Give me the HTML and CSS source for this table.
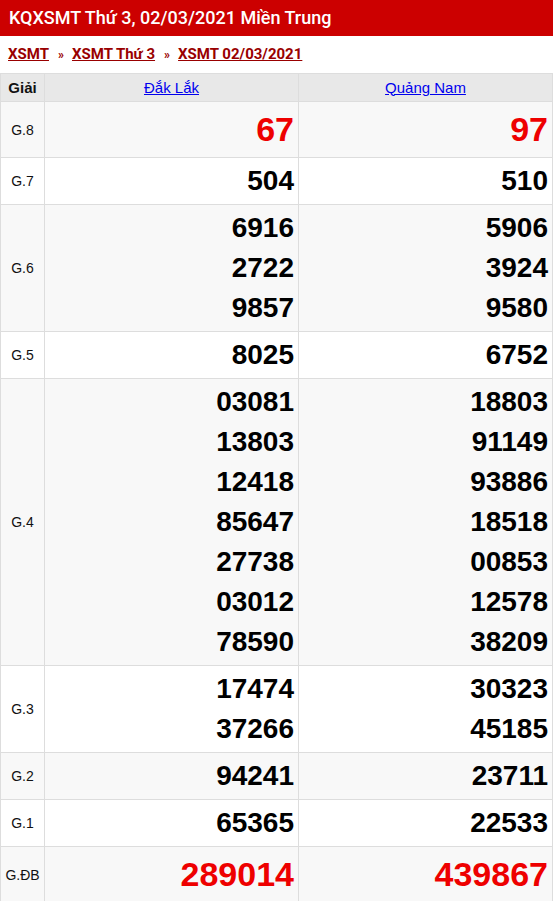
FILE: index.html
```html
<!DOCTYPE html>
<html>
<head>
<meta charset="utf-8">
<title>KQXSMT Thứ 3, 02/03/2021</title>
<link rel="stylesheet" href="styles.css">
</head>
<body>
<h1 class="title">KQXSMT Thứ 3, 02/03/2021 Miền Trung</h1>
<div class="crumbs">
  <a href="#">XSMT</a><span class="sep">»</span><a href="#">XSMT Thứ 3</a><span class="sep">»</span><a href="#">XSMT 02/03/2021</a>
</div>
<table class="results">
  <colgroup>
    <col class="prize">
    <col class="prov">
    <col class="prov">
  </colgroup>
  <thead>
    <tr>
      <th>Giải</th>
      <th><a href="#">Đắk Lắk</a></th>
      <th><a href="#">Quảng Nam</a></th>
    </tr>
  </thead>
  <tbody>
    <tr class="big">
      <td class="name">G.8</td>
      <td><div>67</div></td>
      <td><div>97</div></td>
    </tr>
    <tr>
      <td class="name">G.7</td>
      <td><div>504</div></td>
      <td><div>510</div></td>
    </tr>
    <tr>
      <td class="name">G.6</td>
      <td><div>6916</div><div>2722</div><div>9857</div></td>
      <td><div>5906</div><div>3924</div><div>9580</div></td>
    </tr>
    <tr>
      <td class="name">G.5</td>
      <td><div>8025</div></td>
      <td><div>6752</div></td>
    </tr>
    <tr>
      <td class="name">G.4</td>
      <td><div>03081</div><div>13803</div><div>12418</div><div>85647</div><div>27738</div><div>03012</div><div>78590</div></td>
      <td><div>18803</div><div>91149</div><div>93886</div><div>18518</div><div>00853</div><div>12578</div><div>38209</div></td>
    </tr>
    <tr>
      <td class="name">G.3</td>
      <td><div>17474</div><div>37266</div></td>
      <td><div>30323</div><div>45185</div></td>
    </tr>
    <tr>
      <td class="name">G.2</td>
      <td><div>94241</div></td>
      <td><div>23711</div></td>
    </tr>
    <tr>
      <td class="name">G.1</td>
      <td><div>65365</div></td>
      <td><div>22533</div></td>
    </tr>
    <tr class="big db">
      <td class="name">G.ĐB</td>
      <td><div>289014</div></td>
      <td><div>439867</div></td>
    </tr>
  </tbody>
</table>
</body>
</html>
```
FILE: styles.css
```css
body { margin: 0; padding: 0; background: #fff; font: 14px/20px "Liberation Sans", Arial, sans-serif; color: #222; }
.title { margin: 0; height: 36px; padding: 0 9px; background: #cc0000; color: #fff; font: 500 18px/36px Roboto, "Liberation Sans", sans-serif; }
.crumbs { height: 37px; padding: 0 8px; font: bold 15px/36px Roboto, "Liberation Sans", sans-serif; }
.crumbs a { color: #990000; text-decoration: underline; }
.crumbs .sep { margin: 0 8px 0 9px; color: #990000; font-size: 12px; }
.results { width: 553px; table-layout: fixed; border-collapse: collapse; }
.results col.prize { width: 44px; }
.results th, .results td { border: 1px solid #dddddd; padding: 0; }
.results thead th { height: 27px; background: #e8e8e8; font-weight: bold; font-size: 15px; text-align: center; }
.results thead th:first-child { color: #111; }
.results thead a { color: #0000ee; font-weight: normal; text-decoration: underline; }
.results tbody tr:nth-child(odd) { background: #f8f8f8; }
.results td { padding: 3px 4px 3px 0; text-align: right; font: bold 28px/40px "Liberation Sans", Arial, sans-serif; color: #000; }
.results td.name { padding: 0; text-align: center; font: 14px/20px "Liberation Sans", Arial, sans-serif; color: #111; }
.results tr.big td { line-height: 49px; font-size: 34px; color: #ee0000; }
.results tr.big td.name { font-size: 14px; line-height: 20px; color: #111; }
```
